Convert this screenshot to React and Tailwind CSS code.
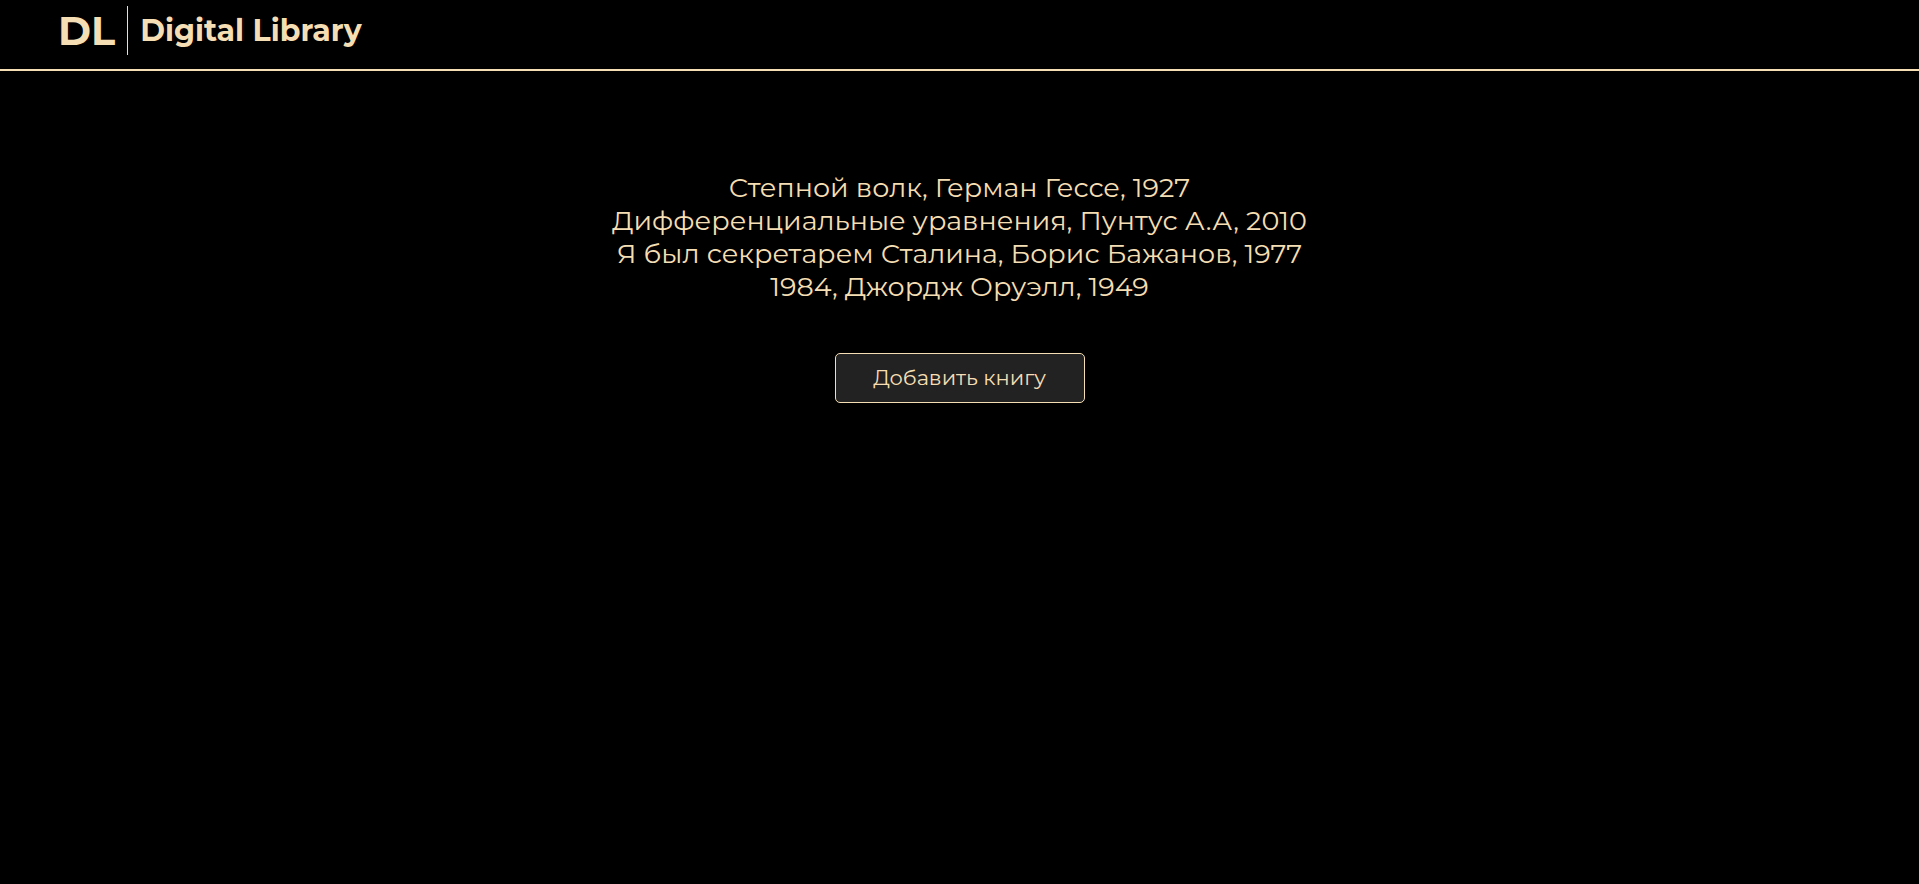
const books = [
  { title: 'Степной волк', author: 'Герман Гессе', year: 1927 },
  { title: 'Дифференциальные уравнения', author: 'Пунтус А.А', year: 2010 },
  { title: 'Я был секретарем Сталина', author: 'Борис Бажанов', year: 1977 },
  { title: '1984', author: 'Джордж Оруэлл', year: 1949 },
];

export default function App() {
  return (
    <div className="flex min-h-screen flex-col bg-black font-['Montserrat','Inter',sans-serif] text-[#f5deb3]">
      <header className="flex items-start border-b-2 border-[#f5deb3] px-[58px] pt-[6px] pb-[14px]">
        <a href="/" className="flex items-center font-bold">
          <span className="pr-3 text-[40px] leading-[49px]">DL</span>
          <span className="border-l border-[#f5deb3] pl-3 text-[30px] leading-[49px]">Digital Library</span>
        </a>
      </header>
      <main className="flex flex-col items-center pt-[100px]">
        <ul className="text-center text-[27px] leading-[33px]">
          {books.map((book) => (
            <li key={book.title}>{`${book.title}, ${book.author}, ${book.year}`}</li>
          ))}
        </ul>
        <button type="button" className="mt-[50px] h-[50px] w-[250px] rounded-[5px] border border-[#f5deb3] bg-[#222222] text-[21px]">
          Добавить книгу
        </button>
      </main>
    </div>
  );
}
